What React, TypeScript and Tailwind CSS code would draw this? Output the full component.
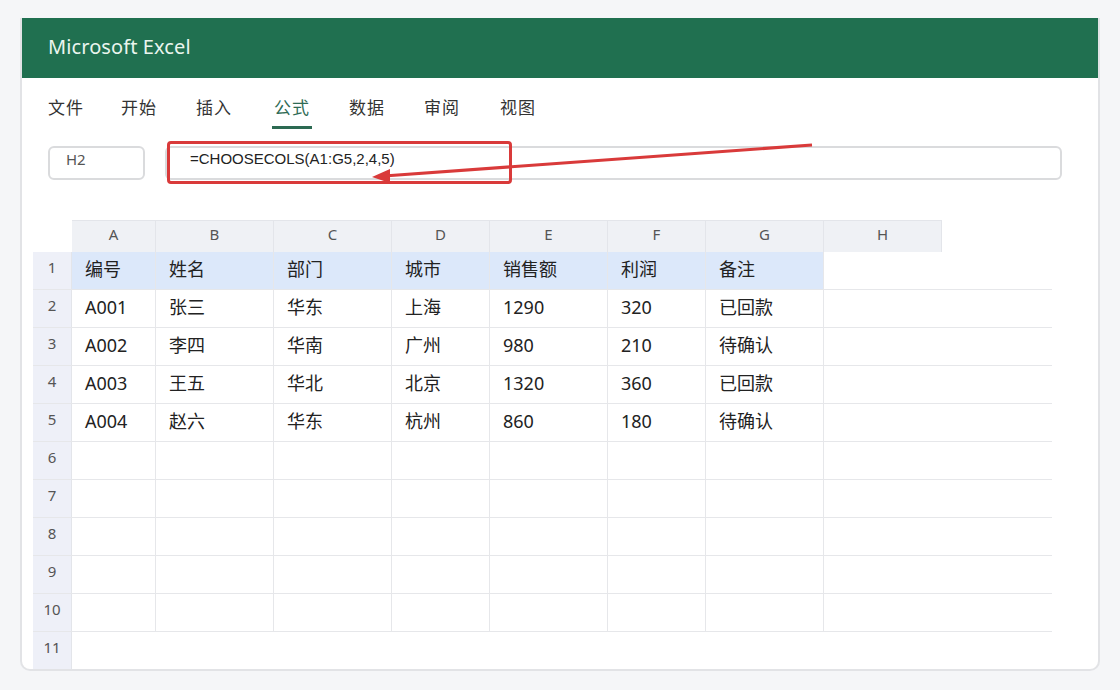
const font = { fontFamily: '"Noto Sans", "Noto Sans CJK SC", sans-serif' };

const tabs = ["文件", "开始", "插入", "公式", "数据", "审阅", "视图"];
const tabX = [48, 121, 196, 272, 349, 424, 500];

const cols = [
  { k: "A", w: 84 },
  { k: "B", w: 118 },
  { k: "C", w: 118 },
  { k: "D", w: 98 },
  { k: "E", w: 118 },
  { k: "F", w: 98 },
  { k: "G", w: 118 },
];

const rows = [
  ["编号", "姓名", "部门", "城市", "销售额", "利润", "备注"],
  ["A001", "张三", "华东", "上海", "1290", "320", "已回款"],
  ["A002", "李四", "华南", "广州", "980", "210", "待确认"],
  ["A003", "王五", "华北", "北京", "1320", "360", "已回款"],
  ["A004", "赵六", "华东", "杭州", "860", "180", "待确认"],
];

export default function App() {
  return (
    <div className="w-[1120px] h-[690px] bg-[#f5f6f8] pt-[18px] px-[20px]" style={font}>
      <div className="relative w-[1080px] h-[653px] bg-white border-x-2 border-b-2 border-[#e2e3e6] rounded-b-[10px] overflow-hidden">
        {/* title bar */}
        <div className="h-[60px] bg-[#207050] flex items-center pl-[26px]">
          <span className="text-[20px] text-[#eaf5ee] tracking-[0.1px] -mt-[3px]">Microsoft Excel</span>
        </div>

        {/* ribbon tabs */}
        <div className="relative h-[52px]">
          {tabs.map((t, i) => (
            <div
              key={t}
              className="absolute top-[18px] flex flex-col items-center"
              style={{ left: tabX[i] - 22 }}
            >
              <span className={`text-[17px] leading-[24px] tracking-[1px] ${i === 3 ? "text-[#2f6b55]" : "text-[#333]"}`}>{t}</span>
              {i === 3 && <div className="mt-[6px] w-[40px] h-[3px] bg-[#2c6a52]" />}
            </div>
          ))}
        </div>

        {/* formula bar */}
        <div className="flex items-center gap-[20px] mt-[16px] pl-[26px] pr-[36px]">
          <div className="w-[97px] h-[34px] border-2 border-[#dadbdd] rounded-[6px] pl-[16px] text-[15px] text-[#555]">H2</div>
          <div className="flex-1 h-[34px] border-2 border-[#dadbdd] rounded-[6px] pl-[23px] text-[15px] text-[#222]" style={{ fontFamily: '"Liberation Sans", sans-serif' }}>
            =CHOOSECOLS(A1:G5,2,4,5)
          </div>
        </div>

        {/* grid */}
        <div className="mt-[40px] ml-[11px]">
          <div className="flex h-[32px]">
            <div className="w-[39px]" />
            {[...cols, { k: "H", w: 118 }].map((c) => (
              <div
                key={c.k}
                className="h-[32px] bg-[#eff1f5] border-r border-t border-[#e3e5ea] flex justify-center pt-[2px] text-[15px] text-[#555]"
                style={{ width: c.w }}
              >
                {c.k}
              </div>
            ))}
          </div>
          {Array.from({ length: 11 }).map((_, r) => (
            <div key={r} className="flex h-[38px] w-[1019px] border-b border-[#e6e7ea]">
              <div className="w-[39px] bg-[#eef0f8] flex items-center justify-center pb-[6px] text-[15px] text-[#555] border-r border-[#e3e5ea]">
                {r + 1}
              </div>
              {cols.map((c, ci) => (
                <div
                  key={c.k}
                  className={`flex items-center pl-[13px] pb-[3px] text-[18px] text-[#222] ${r < 10 ? "border-r border-[#e6e7ea]" : ""} ${r === 0 ? "bg-[#dce8fa]" : ""}`}
                  style={{ width: c.w }}
                >
                  {rows[r]?.[ci] ?? ""}
                </div>
              ))}
              <div className="flex-1" />
            </div>
          ))}
        </div>

        {/* annotation */}
        <div className="absolute left-[145px] top-[123px] w-[345px] h-[43px] border-[3px] border-[#d93a3a] rounded-[4px]" />
        <svg className="absolute left-0 top-0 pointer-events-none" width="1080" height="653">
          <line x1="790" y1="127" x2="362" y2="158" stroke="#d93a3a" strokeWidth="3" />
          <polygon points="350,159 368,151 368,165" fill="#d93a3a" />
        </svg>
      </div>
    </div>
  );
}
